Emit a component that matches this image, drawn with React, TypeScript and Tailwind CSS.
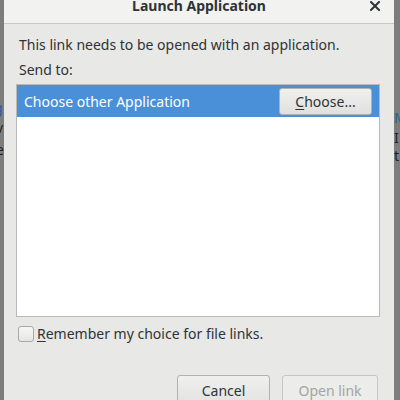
export default function App() {
  const font = { fontFamily: '"Noto Sans", "Open Sans", sans-serif' };
  return (
    <div className="relative w-[400px] h-[400px] overflow-hidden bg-[#7d7d7d]" style={font}>
      {/* dimmed page behind the dialog */}
      <div className="absolute inset-0 text-[14px] leading-[20px]">
        <span className="absolute left-[-6px] top-[98px] text-[#2a5f99]">g</span>
        <span className="absolute left-[-4px] top-[118px] text-[#1f1f1f]">v</span>
        <span className="absolute left-[-4px] top-[140px] text-[#1f1f1f]">e</span>
        <span className="absolute left-[394px] top-[108px] text-[#2a5f99]">M</span>
        <span className="absolute left-[394px] top-[128px] text-[#1f1f1f]">I</span>
        <span className="absolute left-[394px] top-[146px] text-[#1f1f1f]">t</span>
      </div>

      {/* dialog */}
      <div className="absolute left-[4px] top-[-12px] w-[390px] h-[430px] flex flex-col bg-[#e8e8e7] text-[#2e3436]">
        <div className="relative h-[36px] flex items-center justify-center bg-[#f2f2f1] border-b border-[#c8c8c5]">
          <span className="text-[14px] font-bold text-[#2e3436]">Launch Application</span>
          <svg className="absolute right-[14px] top-[13px]" width="10" height="10" viewBox="0 0 10 10">
            <path d="M1 1L9 9M9 1L1 9" stroke="#2e3436" strokeWidth="2" strokeLinecap="square" />
          </svg>
        </div>

        <div className="flex flex-col pt-[11px]">
          <p className="ml-[15px] text-[14px] leading-[20px]">This link needs to be opened with an application.</p>
          <p className="ml-[15px] mt-[5px] text-[14px] leading-[20px]">Send to:</p>

          <div className="ml-[12px] mt-[4px] w-[364px] h-[233px] bg-white border border-[#b9bab6]">
            <div className="h-[32px] bg-[#4a90d9] flex items-center justify-between pl-[7px] pr-[7px]">
              <span className="text-[14px] text-white">Choose other Application</span>
              <button className="w-[93px] h-[27px] rounded-[3px] border border-[#b1b1ad] bg-gradient-to-b from-[#f0f0ef] to-[#e0e0de] text-[14px] text-[#2e3436]">
                <span className="underline underline-offset-2">C</span>hoose...
              </button>
            </div>
          </div>

          <label className="flex items-center ml-[14px] mt-[9px] h-[16px]">
            <span className="w-[16px] h-[16px] rounded-[3px] border border-[#a8a8a5] bg-gradient-to-b from-[#f6f6f5] to-[#e6e6e4]" />
            <span className="ml-[3px] text-[14px] leading-[20px]">
              <span className="underline underline-offset-2">R</span>emember my choice for file links.
            </span>
          </label>

          <div className="flex justify-end gap-[12px] mt-[33px] pr-[16px]">
            <button className="w-[93px] h-[30px] rounded-[3px] border border-[#b1b1ad] bg-gradient-to-b from-[#f0f0ef] to-[#e2e2e0] text-[14px] text-[#2e3436]">
              Cancel
            </button>
            <button className="w-[96px] h-[30px] rounded-[3px] border border-[#c6c6c3] bg-[#ececeb] text-[14px] text-[#a3a5a1]">
              Open link
            </button>
          </div>
        </div>
      </div>
    </div>
  );
}
